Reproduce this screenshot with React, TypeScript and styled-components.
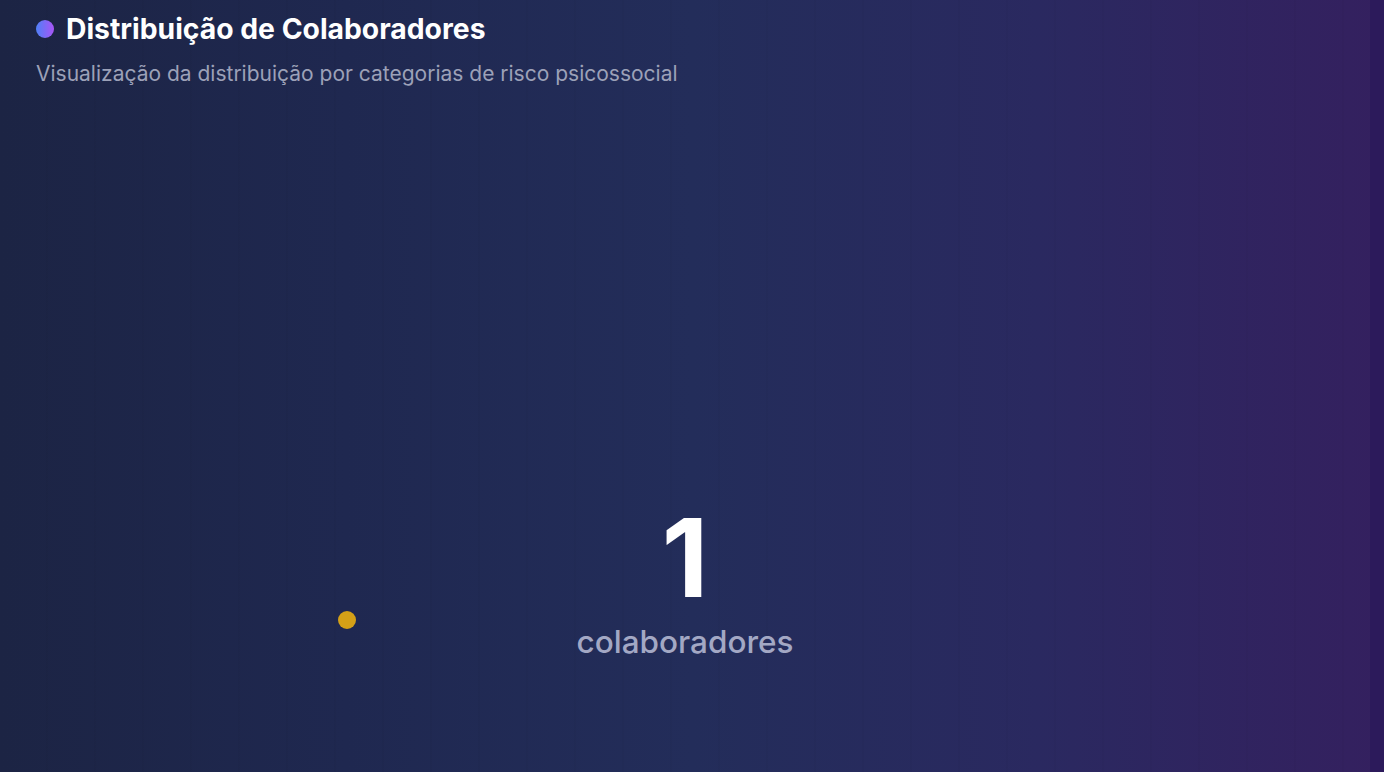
import React from "react";
import styled, { createGlobalStyle } from "styled-components";

const Global = createGlobalStyle`
  html, body { margin: 0; padding: 0; height: 100%; overflow: hidden; }
  body { font-family: Inter, "Noto Sans", sans-serif; background: #1d2545; }
`;

const Page = styled.div`
  width: 1384px;
  height: 772px;
  display: flex;
  background: linear-gradient(90deg, #1c2444 0%, #1f2850 25%, #232d5a 50%, #2a2960 75%, #34205f 100%);
  overflow: hidden;
`;

const Main = styled.div`
  flex: 1;
  display: flex;
  flex-direction: column;
  background-image: repeating-linear-gradient(
    90deg,
    rgba(255, 255, 255, 0) 0px,
    rgba(255, 255, 255, 0) 46px,
    rgba(0, 0, 0, 0.025) 46px,
    rgba(0, 0, 0, 0.025) 48px
  );
`;

const Edge = styled.div`
  width: 14px;
  background: #2c1a5b;
`;

const Header = styled.header`
  padding: 12px 36px 0;
  display: flex;
  flex-direction: column;
  gap: 15px;
`;

const TitleRow = styled.div`
  display: flex;
  align-items: center;
  gap: 12px;
`;

const Dot = styled.span`
  width: 18px;
  height: 18px;
  border-radius: 50%;
  background: linear-gradient(90deg, #4f80f6 0%, #a855f7 100%);
  flex-shrink: 0;
`;

const Title = styled.h1`
  margin: 0;
  font-size: 28.3px;
  line-height: 34px;
  font-weight: 700;
  letter-spacing: 0;
  color: #ffffff;
`;

const Subtitle = styled.p`
  margin: 0;
  font-size: 21px;
  line-height: 26px;
  font-weight: 400;
  color: #9ca1b8;
`;

const Chart = styled.div`
  position: relative;
  flex: 1;
  display: flex;
  flex-direction: column;
  align-items: center;
  padding-top: 421px;
`;

const Value = styled.div`
  font-size: 108px;
  line-height: 100px;
  font-weight: 700;
  color: #ffffff;
`;

const Label = styled.div`
  margin-top: 16px;
  font-size: 31.5px;
  line-height: 36px;
  font-weight: 500;
  color: #a3a8c4;
`;

const Marker = styled.span<{ $x: number; $y: number; $c: string }>`
  position: absolute;
  width: 18px;
  height: 18px;
  border-radius: 50%;
  background: ${(p) => p.$c};
  left: ${(p) => p.$x - 9}px;
  top: ${(p) => p.$y - 9}px;
`;

export default function App() {
  return (
    <>
      <Global />
      <Page>
        <Main>
          <Header>
            <TitleRow>
              <Dot />
              <Title>Distribuição de Colaboradores</Title>
            </TitleRow>
            <Subtitle>Visualização da distribuição por categorias de risco psicossocial</Subtitle>
          </Header>
          <Chart>
            <Marker $x={347} $y={533} $c="#d4a017" />
            <Value>1</Value>
            <Label>colaboradores</Label>
          </Chart>
        </Main>
        <Edge />
      </Page>
    </>
  );
}
